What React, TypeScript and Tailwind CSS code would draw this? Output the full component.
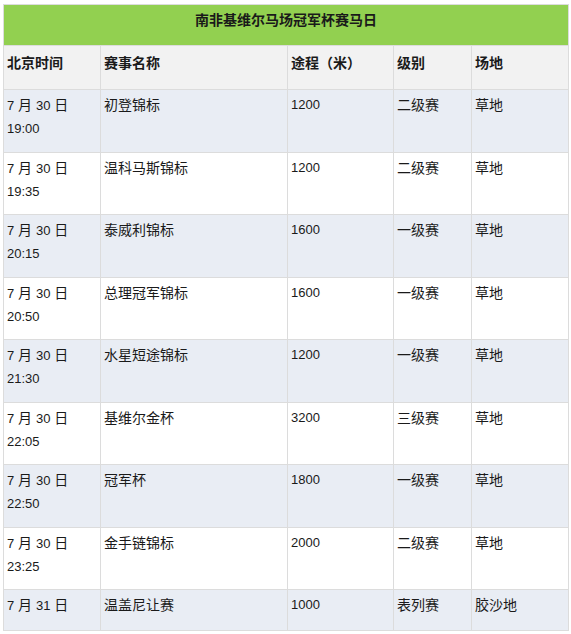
import React from 'react';

interface Race {
  date: string;
  time?: string;
  name: string;
  distance: string;
  grade: string;
  track: string;
}

const races: Race[] = [
  { date: '30', time: '19:00', name: '初登锦标', distance: '1200', grade: '二级赛', track: '草地' },
  { date: '30', time: '19:35', name: '温科马斯锦标', distance: '1200', grade: '二级赛', track: '草地' },
  { date: '30', time: '20:15', name: '泰威利锦标', distance: '1600', grade: '一级赛', track: '草地' },
  { date: '30', time: '20:50', name: '总理冠军锦标', distance: '1600', grade: '一级赛', track: '草地' },
  { date: '30', time: '21:30', name: '水星短途锦标', distance: '1200', grade: '一级赛', track: '草地' },
  { date: '30', time: '22:05', name: '基维尔金杯', distance: '3200', grade: '三级赛', track: '草地' },
  { date: '30', time: '22:50', name: '冠军杯', distance: '1800', grade: '一级赛', track: '草地' },
  { date: '30', time: '23:25', name: '金手链锦标', distance: '2000', grade: '二级赛', track: '草地' },
  { date: '31', name: '温盖尼让赛', distance: '1000', grade: '表列赛', track: '胶沙地' },
];

const font = 'font-["Liberation_Sans","Noto_Sans_CJK_SC",sans-serif]';
const th = 'border border-[#dcdcdc] text-left font-bold px-[3px] pt-[6px] align-top leading-[22px]';
const td = 'border border-[#dcdcdc] align-top px-[3px] pt-[4px] leading-[22px]';

const App: React.FC = () => {
  return (
    <div className={`bg-white min-h-[634px] pt-[4px] pl-[3px] ${font} text-[14px] text-[#1a1a1a]`}>
      <table className="w-[565px] border-collapse table-fixed">
        <colgroup>
          <col className="w-[97px]" />
          <col className="w-[187px]" />
          <col className="w-[106px]" />
          <col className="w-[78px]" />
          <col className="w-[97px]" />
        </colgroup>
        <thead>
          {/* Title */}
          <tr className="h-[41px] bg-[#92d050]">
            <th colSpan={5} className="border border-[#dcdcdc] font-bold text-center align-top pt-[4px] leading-[22px]">
              南非基维尔马场冠军杯赛马日
            </th>
          </tr>
          <tr className="h-[44px] bg-[#f2f2f2]">
            <th className={th}>北京时间</th>
            <th className={th}>赛事名称</th>
            <th className={th}>途程（米）</th>
            <th className={th}>级别</th>
            <th className={th}>场地</th>
          </tr>
        </thead>
        <tbody>
          {races.map((r, i) => (
            <tr
              key={i}
              className={`${r.time ? 'h-[62.5px]' : 'h-[41px]'} ${i % 2 === 0 ? 'bg-[#e9edf4]' : 'bg-white'}`}
            >
              <td className={td}>
                <span className="text-[13px]">7</span> 月 <span className="text-[13px]">{r.date}</span> 日
                {r.time && (
                  <>
                    <br />
                    <span className="text-[13px]">{r.time}</span>
                  </>
                )}
              </td>
              <td className={td}>{r.name}</td>
              <td className={`${td} text-[13px]`}>{r.distance}</td>
              <td className={td}>{r.grade}</td>
              <td className={td}>{r.track}</td>
            </tr>
          ))}
        </tbody>
      </table>
    </div>
  );
};

export default App;
